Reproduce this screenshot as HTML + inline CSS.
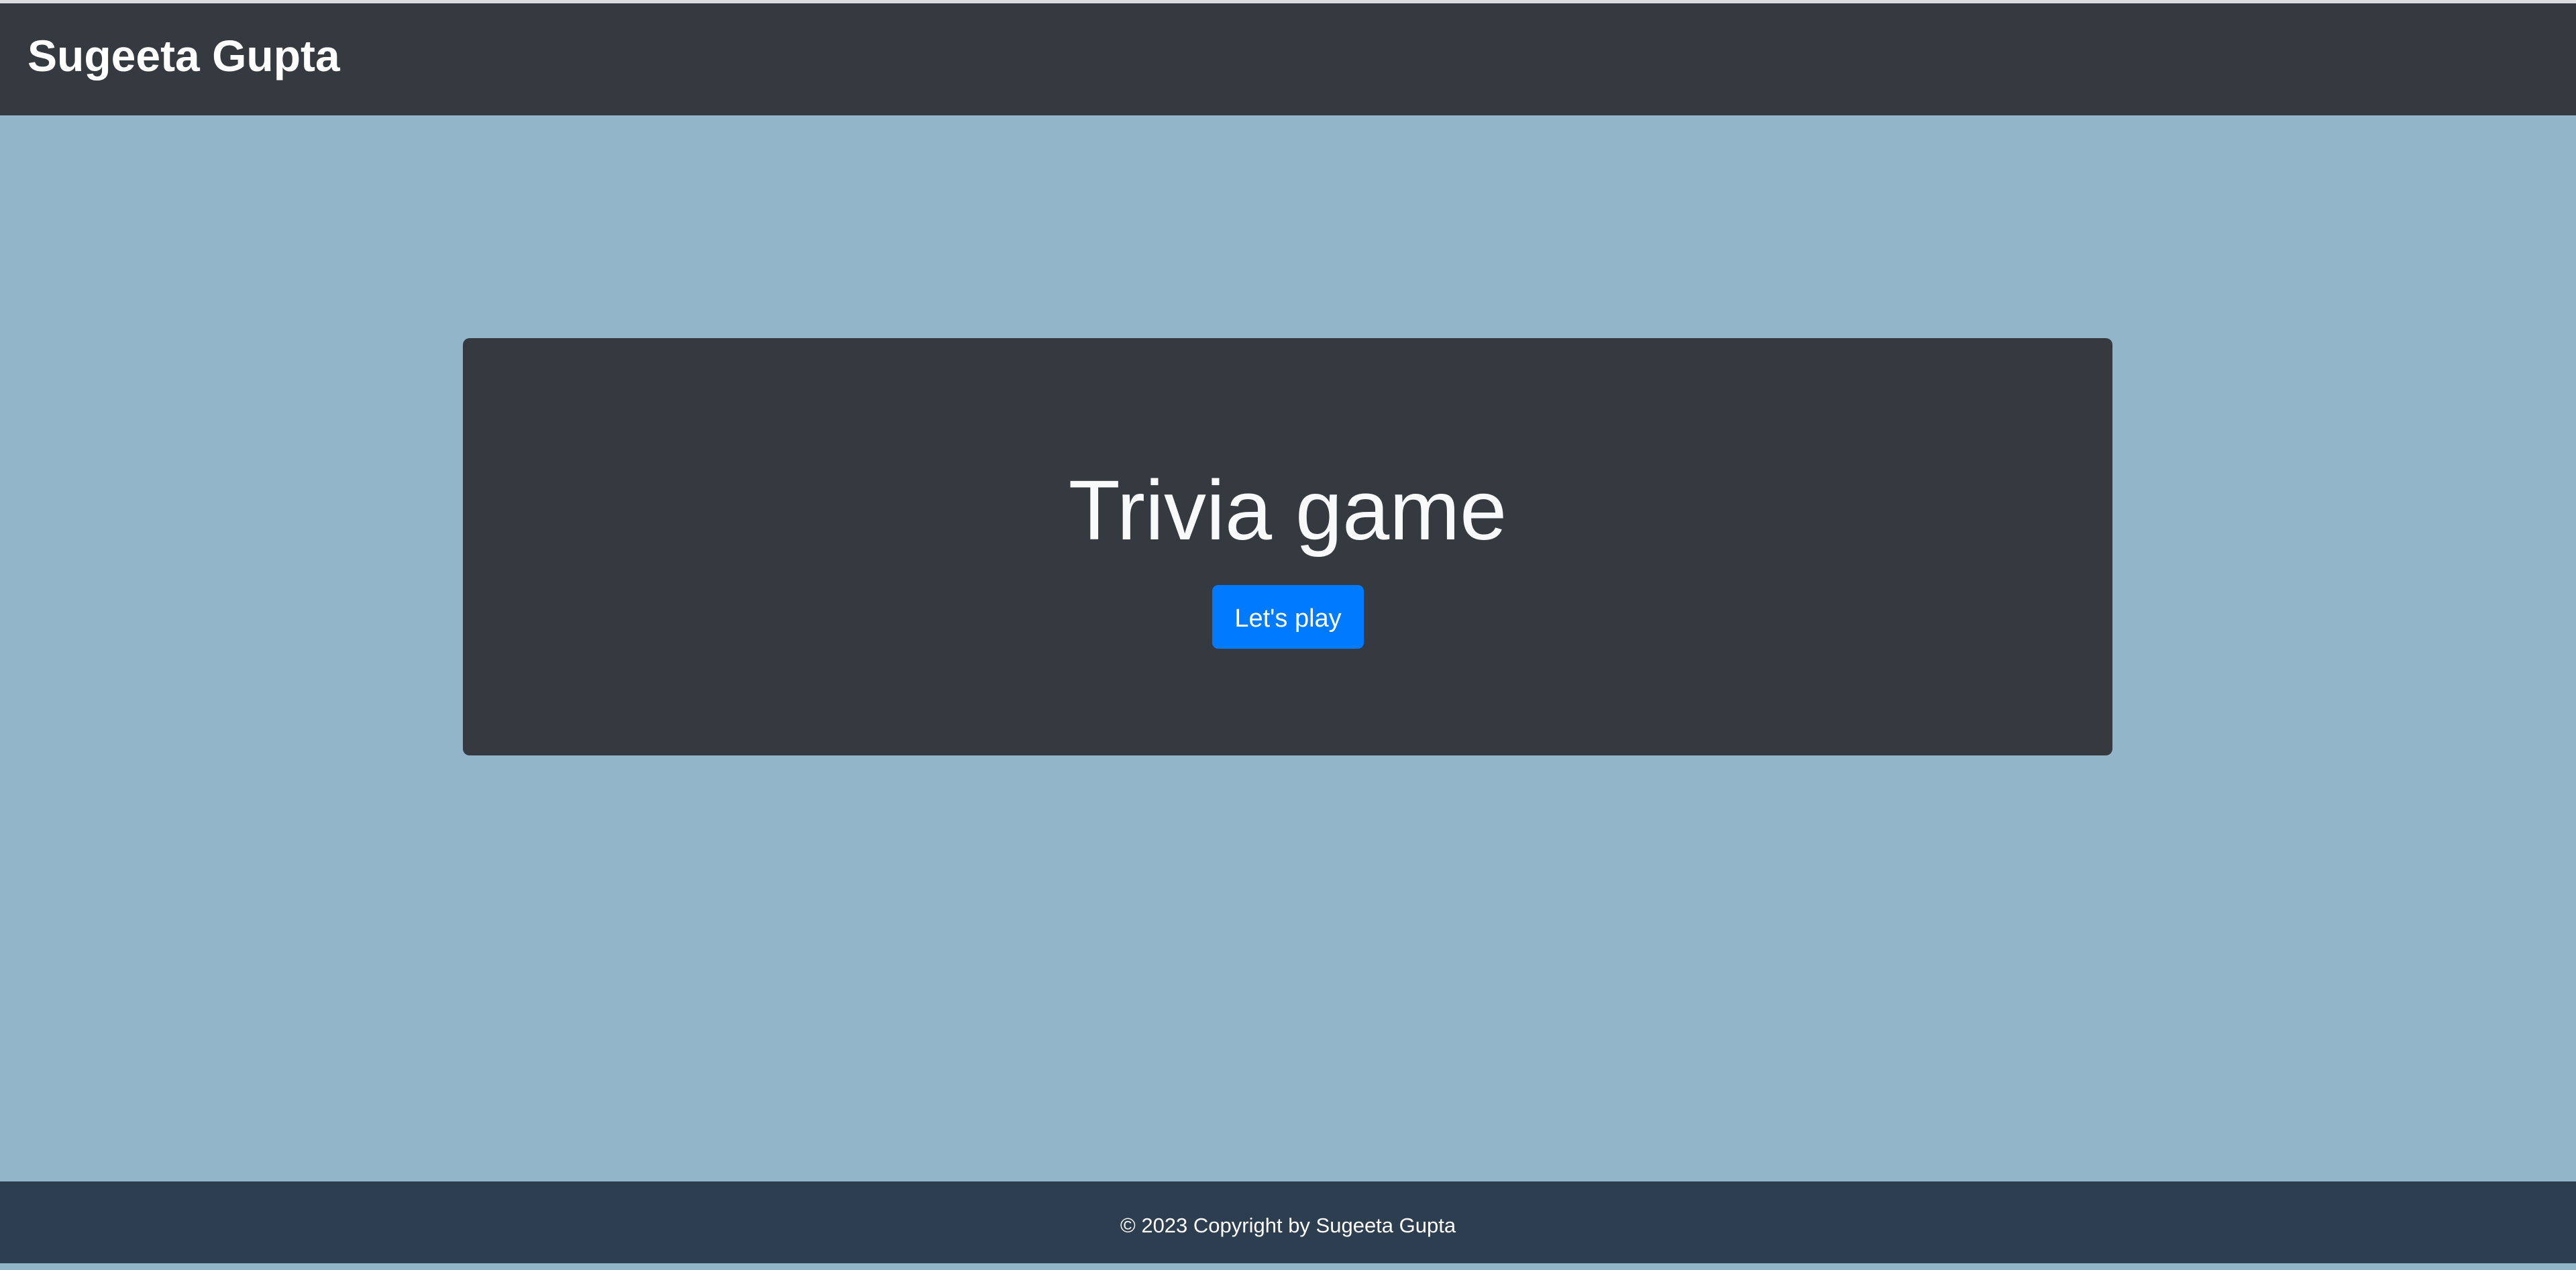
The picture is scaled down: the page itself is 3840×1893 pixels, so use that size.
<!DOCTYPE html>
<html><head><meta charset="utf-8"><style>
html,body{margin:0;padding:0;width:3840px;height:1883px;overflow:hidden;background:#92b5c9;font-family:"Liberation Sans",sans-serif;}
.top{position:absolute;left:0;top:0;width:3840px;height:5px;background:#dcdde0;}
.nav{position:absolute;left:0;top:5px;width:3840px;height:167px;background:#343a40;}
.brand{position:absolute;left:41px;top:38px;font-size:66px;font-weight:bold;color:#fff;line-height:80px;}
.card{position:absolute;left:690px;top:504px;width:2459px;height:622px;background:#343a40;border-radius:10px;}
.title{position:absolute;left:0;width:100%;top:182px;text-align:center;color:#f8f9fa;font-size:126px;line-height:150px;font-weight:300;}
.btn{position:absolute;left:1117px;top:368px;width:226px;height:95px;background:#007bff;border-radius:9px;color:#fff;font-size:38px;line-height:101px;text-align:center;}
.foot{position:absolute;left:0;top:1761px;width:3840px;height:122px;background:#2c3e50;color:#fff;text-align:center;font-size:31px;line-height:132px;}
</style></head><body>
<div class="top"></div>
<div class="nav"><div class="brand">Sugeeta Gupta</div></div>
<div class="card"><div class="title">Trivia game</div><div class="btn">Let's play</div></div>
<div class="foot">© 2023 Copyright by Sugeeta Gupta</div>
</body></html>
